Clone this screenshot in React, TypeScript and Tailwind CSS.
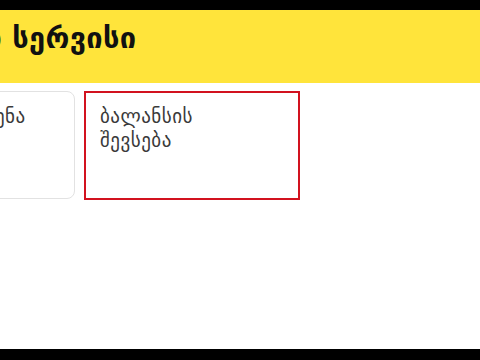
export default function App() {
  const font = { fontFamily: '"DejaVu Sans", "Noto Sans", sans-serif' };
  return (
    <div className="w-[480px] h-[360px] bg-white flex flex-col overflow-hidden" style={font}>
      <div className="h-[10px] bg-black shrink-0" />
      <div className="h-[73px] bg-[#ffe43b] shrink-0 flex items-center overflow-hidden">
        <h1 className="ml-[-120px] whitespace-nowrap text-[29px] font-bold text-[#111] leading-none tracking-[0.3px] pb-[16px]">
          ონლაინ სერვისი
        </h1>
      </div>
      <div className="flex gap-[9px] pt-[8px] ml-[-141px] shrink-0">
        <div className="w-[216px] h-[108px] shrink-0 rounded-[8px] border border-[#e2e2e2] bg-white pt-[12px] text-[19px] leading-[24px] text-[#3a3a3a] tracking-[0.4px]">
          <span className="block pl-[135px]">ენა</span>
        </div>
        <div className="w-[216px] h-[109px] shrink-0 border-2 border-[#d2121f] bg-white px-[14px] pt-[11px] text-[19px] leading-[24px] text-[#3a3a3a] tracking-[0.5px]">
          ბალანსის<br />შევსება
        </div>
      </div>
      <div className="flex-1" />
      <div className="h-[11px] bg-black shrink-0" />
    </div>
  );
}
